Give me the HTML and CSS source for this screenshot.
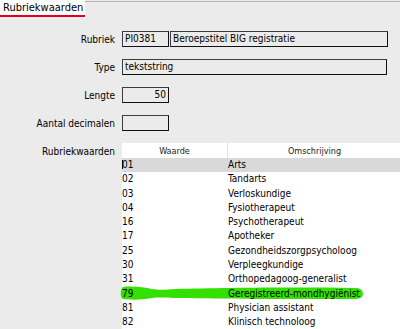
FILE: index.html
```html
<!DOCTYPE html>
<html lang="nl">
<head>
    <meta charset="UTF-8">
    <title>Rubriekwaarden</title>
    <link rel="stylesheet" href="styles.css">
</head>
<body>
    <!-- Tabblad -->
    <div class="tabs">
        <div class="tab active">Rubriekwaarden</div>
        <div class="tab-rest"></div>
    </div>

    <!-- Formulier -->
    <div class="form">
        <div class="row">
            <span class="label">Rubriek</span>
            <div class="fields">
                <span class="box small">PI0381</span>
                <span class="box wide">Beroepstitel BIG registratie</span>
            </div>
        </div>
        <div class="row">
            <span class="label">Type</span>
            <span class="box full">tekststring</span>
        </div>
        <div class="row">
            <span class="label">Lengte</span>
            <span class="box small right">50</span>
        </div>
        <div class="row">
            <span class="label">Aantal decimalen</span>
            <span class="box small"></span>
        </div>
        <div class="row table-row">
            <span class="label">Rubriekwaarden</span>
            <div class="grid">
                <!-- markeerstift over regel 79 -->
                <svg class="marker" width="244" height="15" viewBox="0 0 244 15">
                    <path d="M3 1 C 12 0, 24 1, 32 3 C 38 4, 44 4, 56 3 C 100 2, 170 1, 236 2 C 241 2, 243 5, 243 8 C 243 11, 240 13, 234 13 C 170 13, 100 13, 60 12 C 46 12, 40 11, 32 12 C 22 14, 10 14, 3 13 C 0 12, 0 3, 3 1 Z" fill="#33e000"/>
                </svg>
                <div class="head">
                    <span class="c1">Waarde</span>
                    <span class="c2">Omschrijving</span>
                </div>
                <div class="line selected"><span class="c1"><i class="caret"></i>01</span><span class="c2">Arts</span></div>
                <div class="line"><span class="c1">02</span><span class="c2">Tandarts</span></div>
                <div class="line"><span class="c1">03</span><span class="c2">Verloskundige</span></div>
                <div class="line"><span class="c1">04</span><span class="c2">Fysiotherapeut</span></div>
                <div class="line"><span class="c1">16</span><span class="c2">Psychotherapeut</span></div>
                <div class="line"><span class="c1">17</span><span class="c2">Apotheker</span></div>
                <div class="line"><span class="c1">25</span><span class="c2">Gezondheidszorgpsycholoog</span></div>
                <div class="line"><span class="c1">30</span><span class="c2">Verpleegkundige</span></div>
                <div class="line"><span class="c1">31</span><span class="c2">Orthopedagoog-generalist</span></div>
                <div class="line"><span class="c1">79</span><span class="c2">Geregistreerd-mondhygiënist</span></div>
                <div class="line"><span class="c1">81</span><span class="c2">Physician assistant</span></div>
                <div class="line"><span class="c1">82</span><span class="c2">Klinisch technoloog</span></div>
            </div>
        </div>
    </div>
</body>
</html>
```

FILE: styles.css
```css
body {
    margin: 0;
    background: #ebebeb;
    font-family: "DejaVu Sans Condensed", "DejaVu Sans", sans-serif;
    font-size: 10px;
    color: #000;
    overflow: hidden;
}
.tabs {
    display: flex;
    height: 18px;
}
.tab {
    background: #fff;
    width: 82px;
    padding-left: 3px;
    height: 15px;
    line-height: 15px;
    font-size: 11px;
    border-bottom: 2px solid #e0001b;
}
.tab-rest {
    flex: 1;
    border-top: 1px solid #b5b5b5;
    margin-top: 1px;
}
.form {
    padding-top: 13px;
}
.row {
    display: grid;
    grid-template-columns: 115px auto;
    column-gap: 7px;
    align-items: center;
    height: 16px;
    margin-bottom: 12px;
}
.label {
    text-align: right;
}
.fields {
    display: flex;
    gap: 1px;
}
.box {
    display: block;
    box-sizing: border-box;
    height: 16px;
    line-height: 14px;
    padding: 0 2px;
    border: 1px solid #3c3c3c;
    border-right-color: #111;
    border-bottom-color: #111;
    background: #ebebeb;
    white-space: nowrap;
}
.small {
    width: 47px;
}
.wide {
    width: 218px;
}
.full {
    width: 265px;
}
.right {
    text-align: right;
}
.table-row {
    align-items: start;
    height: auto;
    margin-top: 1px;
}
.table-row .label {
    margin-top: 3px;
}
.grid {
    position: relative;
    background: #fff;
    width: 278px;
    height: 190px;
}
.head {
    display: flex;
    height: 15px;
    line-height: 16px;
    font-size: 9px;
    color: #222;
}
.head .c1 {
    text-align: center;
    border-right: 1px solid #e2e2e2;
}
.head .c2 {
    text-align: center;
    width: 172px;
}
.line {
    position: relative;
    display: flex;
    height: 14.3px;
    line-height: 14px;
}
.line.selected {
    background: #d9d9d9;
}
.c1 {
    width: 105px;
    flex: none;
}
.c2 {
    padding-left: 1px;
}
.caret {
    display: inline-block;
    width: 1px;
    height: 9px;
    background: #000;
    vertical-align: -1px;
    margin-right: -1px;
}
.marker {
    position: absolute;
    left: -2px;
    top: 143px;
}
```
